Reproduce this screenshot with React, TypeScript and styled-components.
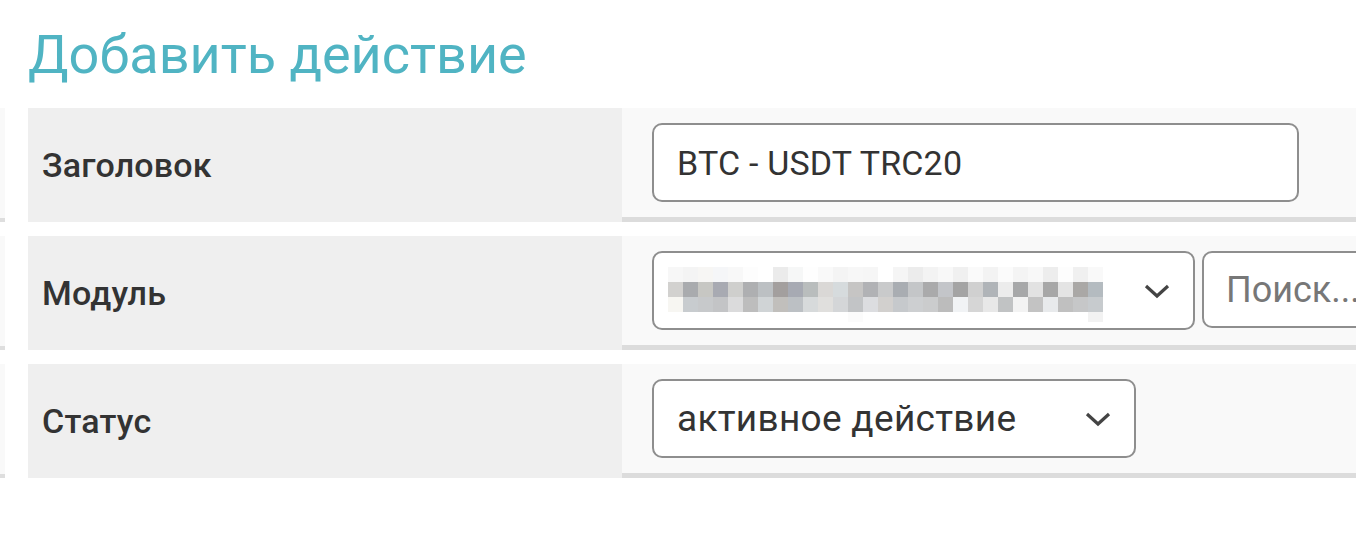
import styled, { createGlobalStyle } from 'styled-components';

const GlobalStyle = createGlobalStyle`
  body {
    margin: 0;
    background: #fff;
    font-family: Roboto, 'Liberation Sans', sans-serif;
  }
`;

type TRow = {
  label: string;
  children: React.ReactNode;
};

function FormRow({ label, children }: TRow) {
  return (
    <Row>
      <EdgeStrip />
      <LabelCell>{label}</LabelCell>
      <FieldCell>{children}</FieldCell>
    </Row>
  );
}

function Chevron() {
  return (
    <ChevronIcon width='28' height='16' viewBox='0 0 28 16'>
      <polyline points='3,3 14,13 25,3' fill='none' stroke='#444' strokeWidth='3.2' />
    </ChevronIcon>
  );
}

// the module name is pixelated in the reference
const mosaic = [
  ['#f7f7f7', '#f4f4f4', '#f7f6f4', '#f5f6f8', '#f8f8f8', '#fdfdfd', '#ffffff', '#ebebeb', '#f6f7f7', '#fefefe', '#f9f9f9', '#f4f4f4', '#f7f7f7', '#f6f6f6', '#ffffff', '#f5f5f5', '#ececec', '#f3f3f3', '#f8f8f8', '#f0f0f0', '#fafafa', '#f3f3f3', '#fbfbfb', '#f4f4f4', '#f8f8f8', '#ededed', '#fdfdfd', '#f0f0f0', '#f9f9f9'],
  ['#d2d1cf', '#a9abae', '#c7c7c3', '#a8aab2', '#cfcfcd', '#aeafb1', '#bcc0c3', '#a39f9e', '#a7aab3', '#b9bdbd', '#dad8d6', '#d6dbdd', '#c6c5c4', '#b1b2b5', '#c9cacb', '#a9adb2', '#c4c6c8', '#aaaaab', '#c3c5c9', '#a4a4a4', '#d0d0d0', '#b0b4b8', '#ececec', '#a7a8a9', '#e2e2e2', '#a7a7a7', '#e4e4e4', '#aaa8a6', '#b4bbc0'],
  ['#f7f6f2', '#c8cccf', '#c7c9cb', '#c3c4c6', '#dbdbdc', '#bdbdbd', '#d0d4d6', '#c1bfbc', '#bcc0c4', '#d7dadb', '#e0dfdd', '#d4d6d8', '#c2c4c6', '#dcdde0', '#d2d0ce', '#c6c9cc', '#cdcfd1', '#cbcccd', '#bcbcbc', '#f1f3f5', '#d6d6d6', '#e8e8e8', '#c1c3c4', '#f3f3f3', '#c3c3c3', '#e8eaec', '#c0c0c0', '#c6c7c8', '#c7cbce'],
  ['#ffffff', '#ffffff', '#ffffff', '#ffffff', '#ffffff', '#ffffff', '#ffffff', '#ffffff', '#ffffff', '#ffffff', '#ffffff', '#ffffff', '#fbfbfb', '#ffffff', '#ffffff', '#ffffff', '#ffffff', '#ffffff', '#ffffff', '#ffffff', '#ffffff', '#ffffff', '#ffffff', '#ffffff', '#ffffff', '#ffffff', '#ffffff', '#ffffff', '#f2f2f2'],
];

function Mosaic() {
  return (
    <MosaicSvg width='435' height='55' viewBox='0 0 435 55' shapeRendering='crispEdges'>
      {mosaic.map((row, r) =>
        row.map((c, i) => <rect key={r + '-' + i} x={i * 15} y={r * 15} width='15' height={r === 3 ? 10 : 15} fill={c} />)
      )}
    </MosaicSvg>
  );
}

export default function App() {
  return (
    <Page>
      <GlobalStyle />
      <Title>Добавить действие</Title>
      <Form>
        <FormRow label='Заголовок'>
          <TextInput width={647} defaultValue='BTC - USDT TRC20' />
        </FormRow>
        <FormRow label='Модуль'>
          <SelectBox width={543}>
            <Mosaic />
            <Chevron />
          </SelectBox>
          <SearchInput placeholder='Поиск...' />
        </FormRow>
        <FormRow label='Статус'>
          <SelectBox width={484}>
            <SelectText>активное действие</SelectText>
            <Chevron />
          </SelectBox>
        </FormRow>
      </Form>
    </Page>
  );
}

const Page = styled.div`
  width: 1356px;
  height: 535px;
  overflow: hidden;
`;

const Title = styled.h1`
  margin: 0;
  padding: 23px 0 0 28px;
  height: 108px;
  box-sizing: border-box;
  font-size: 54px;
  line-height: 64px;
  font-weight: 400;
  color: #50b4c3;
`;

const Form = styled.div`
  display: flex;
  flex-direction: column;
  gap: 14px;
`;

const Row = styled.div`
  display: flex;
  height: 114px;
`;

const EdgeStrip = styled.div`
  width: 5px;
  margin-right: 23px;
  background: #f9f9f9;
  border-bottom: 4px solid #dedede;
  box-sizing: border-box;
`;

const LabelCell = styled.div`
  width: 594px;
  display: flex;
  align-items: center;
  padding-left: 14px;
  box-sizing: border-box;
  background: #efefef;
  color: #333;
  font-size: 34px;
  font-weight: 500;
  letter-spacing: 0.2px;
`;

const FieldCell = styled.div`
  flex: 1;
  display: flex;
  align-items: center;
  gap: 7px;
  padding-left: 30px;
  background: #f9f9f9;
  border-bottom: 5px solid #dcdcdc;
  box-sizing: border-box;
  min-width: 0;
`;

const TextInput = styled.input<{ width: number }>`
  width: ${(p) => p.width}px;
  height: 79px;
  box-sizing: border-box;
  padding: 0 23px;
  border: 2px solid #8e8e8e;
  border-radius: 10px;
  background: #fff;
  font-family: Roboto, sans-serif;
  font-size: 34px;
  letter-spacing: 0.2px;
  color: #333;
  outline: none;
`;

const SelectBox = styled.div<{ width: number }>`
  width: ${(p) => p.width}px;
  flex-shrink: 0;
  height: 79px;
  box-sizing: border-box;
  display: flex;
  align-items: center;
  justify-content: space-between;
  padding: 0 22px 0 14px;
  border: 2px solid #8e8e8e;
  border-radius: 10px;
  background: #fff;
`;

const SelectText = styled.span`
  padding-left: 9px;
  font-size: 37px;
  letter-spacing: 0.3px;
  color: #333;
`;

const MosaicSvg = styled.svg`
  display: block;
  margin-top: 8px;
`;

const ChevronIcon = styled.svg`
  display: block;
`;

const SearchInput = styled.input`
  width: 220px;
  flex-shrink: 0;
  height: 77px;
  margin-bottom: 2px;
  box-sizing: border-box;
  padding: 0 22px;
  border: 2px solid #8e8e8e;
  border-radius: 10px;
  background: #fff;
  font-family: Roboto, sans-serif;
  font-size: 36px;
  outline: none;
  &::placeholder {
    color: #777;
  }
`;
